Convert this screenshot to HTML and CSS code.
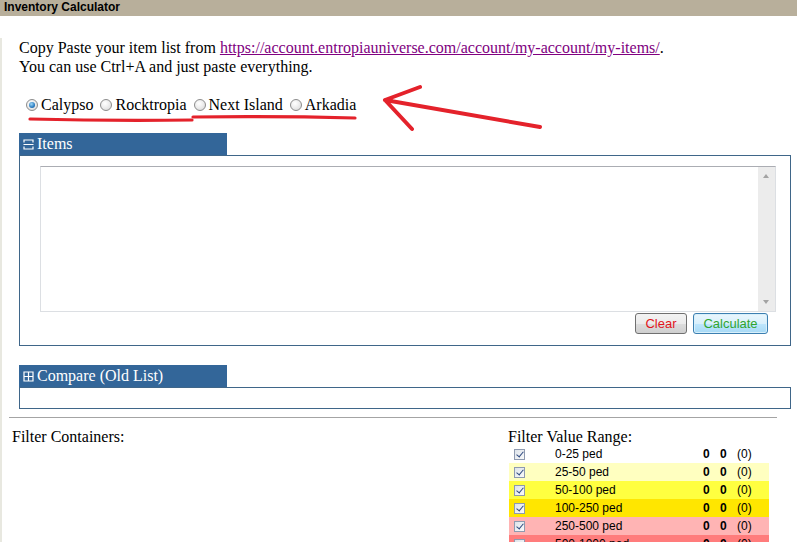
FILE: index.html
```html
<!DOCTYPE html>
<html>
<head>
<meta charset="utf-8">
<link rel="stylesheet" href="styles.css">
</head>
<body>
<div class="titlebar">Inventory Calculator</div>
<div class="page">
  <div class="main">
    <p class="intro">Copy Paste your item list from <a href="#">https://account.entropiauniverse.com/account/my-account/my-items/</a>.<br>You can use Ctrl+A and just paste everything.</p>
    <div class="planets">
      <label class="opt"><span class="radio checked"></span>Calypso</label>
      <label class="opt"><span class="radio"></span>Rocktropia</label>
      <label class="opt"><span class="radio"></span>Next Island</label>
      <label class="opt"><span class="radio"></span>Arkadia</label>
    </div>
    <div class="panel">
      <div class="tab"><svg width="11" height="11" viewBox="0 0 11 11"><path d="M1 3.5V1h9v2.5M1 7.5V10h9V7.5M0.5 5.5h10" fill="none" stroke="#fff" stroke-width="1.2"/></svg><span>Items</span></div>
      <div class="box items-box">
        <div class="textarea"><div class="scroll"><span class="arr up"></span><span class="arr down"></span></div></div>
        <div class="buttons">
          <button class="btn clear">Clear</button>
          <button class="btn calc">Calculate</button>
        </div>
      </div>
    </div>
    <div class="panel compare">
      <div class="tab"><svg width="11" height="11" viewBox="0 0 11 11"><path d="M1 1h9v9H1zM5.5 1v9M1 5.5h9" fill="none" stroke="#fff" stroke-width="1.2"/></svg><span>Compare (Old List)</span></div>
      <div class="box compare-box"></div>
    </div>
  </div>
  <hr class="sep">
  <div class="filters">
    <div class="fcol"><div class="fhead">Filter Containers:</div></div>
    <div class="fcol">
      <div class="fhead">Filter Value Range:</div>
      <div class="ranges">
        <div class="row r0"><span class="cb"></span><span>0-25 ped</span><b>0</b><b>0</b><span>(0)</span></div>
        <div class="row r1"><span class="cb"></span><span>25-50 ped</span><b>0</b><b>0</b><span>(0)</span></div>
        <div class="row r2"><span class="cb"></span><span>50-100 ped</span><b>0</b><b>0</b><span>(0)</span></div>
        <div class="row r3"><span class="cb"></span><span>100-250 ped</span><b>0</b><b>0</b><span>(0)</span></div>
        <div class="row r4"><span class="cb"></span><span>250-500 ped</span><b>0</b><b>0</b><span>(0)</span></div>
        <div class="row r5"><span class="cb empty"></span><span>500-1000 ped</span><b>0</b><b>0</b><span>(0)</span></div>
      </div>
    </div>
  </div>
</div>
<svg class="annot" width="797" height="542" viewBox="0 0 797 542">
  <g fill="none" stroke="#e4222b" stroke-linecap="round" stroke-linejoin="round">
    <path d="M30 119 Q110 121 192 120" stroke-width="3.2"/>
    <path d="M193 117 Q275 116 355 118" stroke-width="3.2"/>
    <path d="M540 127 L385 100 M385 100 L420 87 M385 100 L412 129" stroke-width="4"/>
  </g>
</svg>
</body>
</html>
```
FILE: styles.css
```css
html, body { margin: 0; padding: 0; background: #fff; }
body {
  font-family: "Liberation Serif", "Times New Roman", serif;
  font-size: 16px;
  color: #000;
  width: 797px;
  height: 542px;
  overflow: hidden;
  position: relative;
}
.titlebar {
  height: 16px;
  line-height: 16px;
  background: #b8af9b;
  font: bold 12px "Liberation Sans", Arial, sans-serif;
  padding-left: 4px;
}
.page {
  border-left: 2px solid #e8e8e0;
  min-height: 526px;
}
.main { padding: 0 6px 0 17px; }
.intro { margin: 22px 0 0; line-height: 19px; }
.intro a { color: #800080; text-decoration: underline; }
.planets {
  margin-top: 19px;
  height: 19px;
  line-height: 19px;
  display: flex;
  align-items: center;
  padding-left: 7px;
}
.opt { display: flex; align-items: center; margin-right: 7px; }
.radio {
  width: 10px; height: 10px;
  border: 1px solid #8c8c8c;
  border-radius: 50%;
  background: radial-gradient(circle at 40% 35%, #ffffff 0%, #f0f0f0 40%, #d4d4d4 100%);
  margin-right: 3px;
  position: relative;
  box-sizing: content-box;
}
.radio.checked::after {
  content: "";
  position: absolute;
  left: 2px; top: 2px;
  width: 6px; height: 6px;
  border-radius: 50%;
  background: radial-gradient(circle at 40% 35%, #9fd8f8 0%, #2b7cc0 60%, #174f8a 100%);
}
.panel { margin-top: 19px; }
.tab {
  width: 208px;
  height: 22px;
  background: #336699;
  color: #fff;
  display: flex;
  align-items: center;
  gap: 3px;
  padding-left: 4px;
  box-sizing: border-box;
  font-size: 16px;
}
.tab svg { display: block; }
.box { border: 1px solid #3f6689; }
.items-box { padding: 10px 14px 11px 20px; }
.textarea {
  height: 146px;
  box-sizing: border-box;
  border: 1px solid #dcdfe3;
  border-top-color: #abadb3;
  display: flex;
  justify-content: flex-end;
}
.scroll {
  width: 17px;
  background: #ececec;
  position: relative;
}
.arr {
  position: absolute;
  left: 5px;
  width: 0; height: 0;
  border-left: 3.5px solid transparent;
  border-right: 3.5px solid transparent;
}
.arr.up { top: 7px; border-bottom: 4px solid #a3a3a3; }
.arr.down { bottom: 7px; border-top: 4px solid #a3a3a3; }
.buttons {
  margin-top: 1px;
  display: flex;
  justify-content: flex-end;
  gap: 6px;
  padding-right: 8px;
}
.btn {
  height: 21px;
  font: 13px "Liberation Sans", Arial, sans-serif;
  border-radius: 3px;
  padding: 0;
  margin: 0;
  line-height: 19px;
}
.clear {
  width: 52px;
  color: #e2141b;
  border: 1px solid #707070;
  background: linear-gradient(#f3f3f3 0%, #ebebeb 50%, #dddddd 51%, #cfcfcf 100%);
}
.calc {
  width: 75px;
  color: #2fa52f;
  border: 1px solid #3c7fb1;
  box-shadow: inset 0 0 0 1px #d8f0fb;
  background: linear-gradient(#eaf6fd 0%, #d9f0fc 50%, #bee6fd 51%, #a7d9f5 100%);
}
.compare-box { height: 20px; }
.sep {
  margin: 8px 20px 0 7px;
  border: 0;
  border-top: 1px solid #a4a4a4;
  height: 0;
}
.filters {
  display: grid;
  grid-template-columns: 496px 1fr;
  padding-left: 10px;
  margin-top: 10px;
}
.fhead { line-height: 17px; height: 17px; }
.ranges {
  width: 260px;
  margin-left: 1px;
  font: 12px "Liberation Sans", Arial, sans-serif;
}
.row {
  height: 18px;
  display: grid;
  grid-template-columns: 46px 148px 17px 17px auto;
  align-items: center;
}
.row b { font-weight: bold; }
.r0 { background: #ffffff; }
.r1 { background: #ffffc0; }
.r2 { background: #ffff40; }
.r3 { background: #ffe600; }
.r4 { background: #ffb4b4; }
.r5 { background: #ff7c7c; }
.cb {
  width: 11px; height: 11px;
  margin-left: 5px;
  border: 1px solid #8e9ab0;
  background: linear-gradient(135deg, #dde3ea, #fafafa);
  box-sizing: border-box;
  position: relative;
}
.cb:not(.empty)::after {
  content: "";
  position: absolute;
  left: 3px; top: 0px;
  width: 3px; height: 6px;
  border-right: 1.5px solid #2e4a80;
  border-bottom: 1.5px solid #2e4a80;
  transform: rotate(40deg);
}
.annot {
  position: absolute;
  left: 0; top: 0;
  pointer-events: none;
}
```
